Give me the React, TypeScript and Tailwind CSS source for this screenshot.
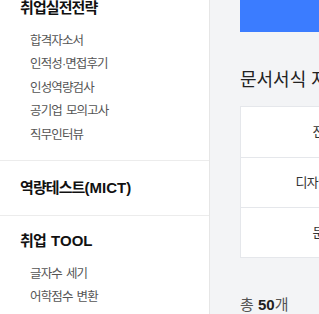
import React from 'react';

const sections = [
  {
    title: '취업실전전략',
    items: ['합격자소서', '인적성·면접후기', '인성역량검사', '공기업 모의고사', '직무인터뷰'],
  },
  { title: '역량테스트(MICT)', items: [] as string[] },
  {
    title: '취업 TOOL',
    items: ['글자수 세기', '어학점수 변환', '맞춤법 검사기'],
  },
];

const rows = ['전체', '디자인서식', '문서'];

// keep latin letters at normal tracking, tighten only hangul
const Title: React.FC<{ text: string }> = ({ text }) => (
  <>
    {text.split(/([A-Za-z()]+)/).map((part, i) =>
      /[A-Za-z()]/.test(part) ? (
        <span key={i} className="tracking-normal">{part}</span>
      ) : (
        <span key={i}>{part}</span>
      )
    )}
  </>
);

const App: React.FC = () => {
  return (
    <div
      className="flex w-[319px] h-[314px] overflow-hidden bg-[#f3f4f6]"
      style={{ fontFamily: '"Liberation Sans", "Noto Sans CJK KR", sans-serif' }}
    >
      {/* Sidebar */}
      <aside className="w-[210px] shrink-0 bg-white border-r border-[#e6e6e6]">
        <div className="-mt-[19px]">
          {sections.map((s, idx) => (
            <div
              key={s.title}
              className={`px-5 ${idx === 0 ? 'pt-[17px] pb-[13px]' : idx === 1 ? 'pt-[17px] pb-[17px]' : 'pt-[15px] pb-4'} ${idx < sections.length - 1 ? 'border-b border-[#ececec]' : ''}`}
            >
              <p className="text-[15px] leading-[20px] font-bold tracking-[-0.06em] [word-spacing:2px] text-[#111]">
                <Title text={s.title} />
              </p>
              {s.items.length > 0 && (
                <ul className="mt-[12px]">
                  {s.items.map((item) => (
                    <li key={item} className="pl-[10px] text-[12.5px] leading-[23.4px] tracking-[-0.07em] [word-spacing:1.5px] text-[#555]">
                      {item}
                    </li>
                  ))}
                </ul>
              )}
            </div>
          ))}
        </div>
      </aside>

      {/* Main */}
      <main className="shrink-0 w-[220px] pl-[30px]">
        <div className="h-[32px] bg-[#3b7cff]"></div>
        <h2 className="mt-[35px] text-[18px] leading-[26px] text-[#222] whitespace-nowrap">문서서식 자료실</h2>
        <div className="mt-[13px] w-[168px] bg-white border border-[#e5e7eb]">
          {rows.map((r, idx) => (
            <div
              key={r}
              className={`h-[50px] flex items-center justify-center text-[13px] tracking-[-0.04em] text-[#333] ${idx > 0 ? 'border-t border-[#e5e7eb]' : ''}`}
            >
              {r}
            </div>
          ))}
        </div>
        <p className="mt-[37px] text-[15px] leading-[20px] text-[#555] whitespace-nowrap">
          총 <span className="font-bold text-[#222]">50</span>개
        </p>
      </main>
    </div>
  );
};

export default App;
